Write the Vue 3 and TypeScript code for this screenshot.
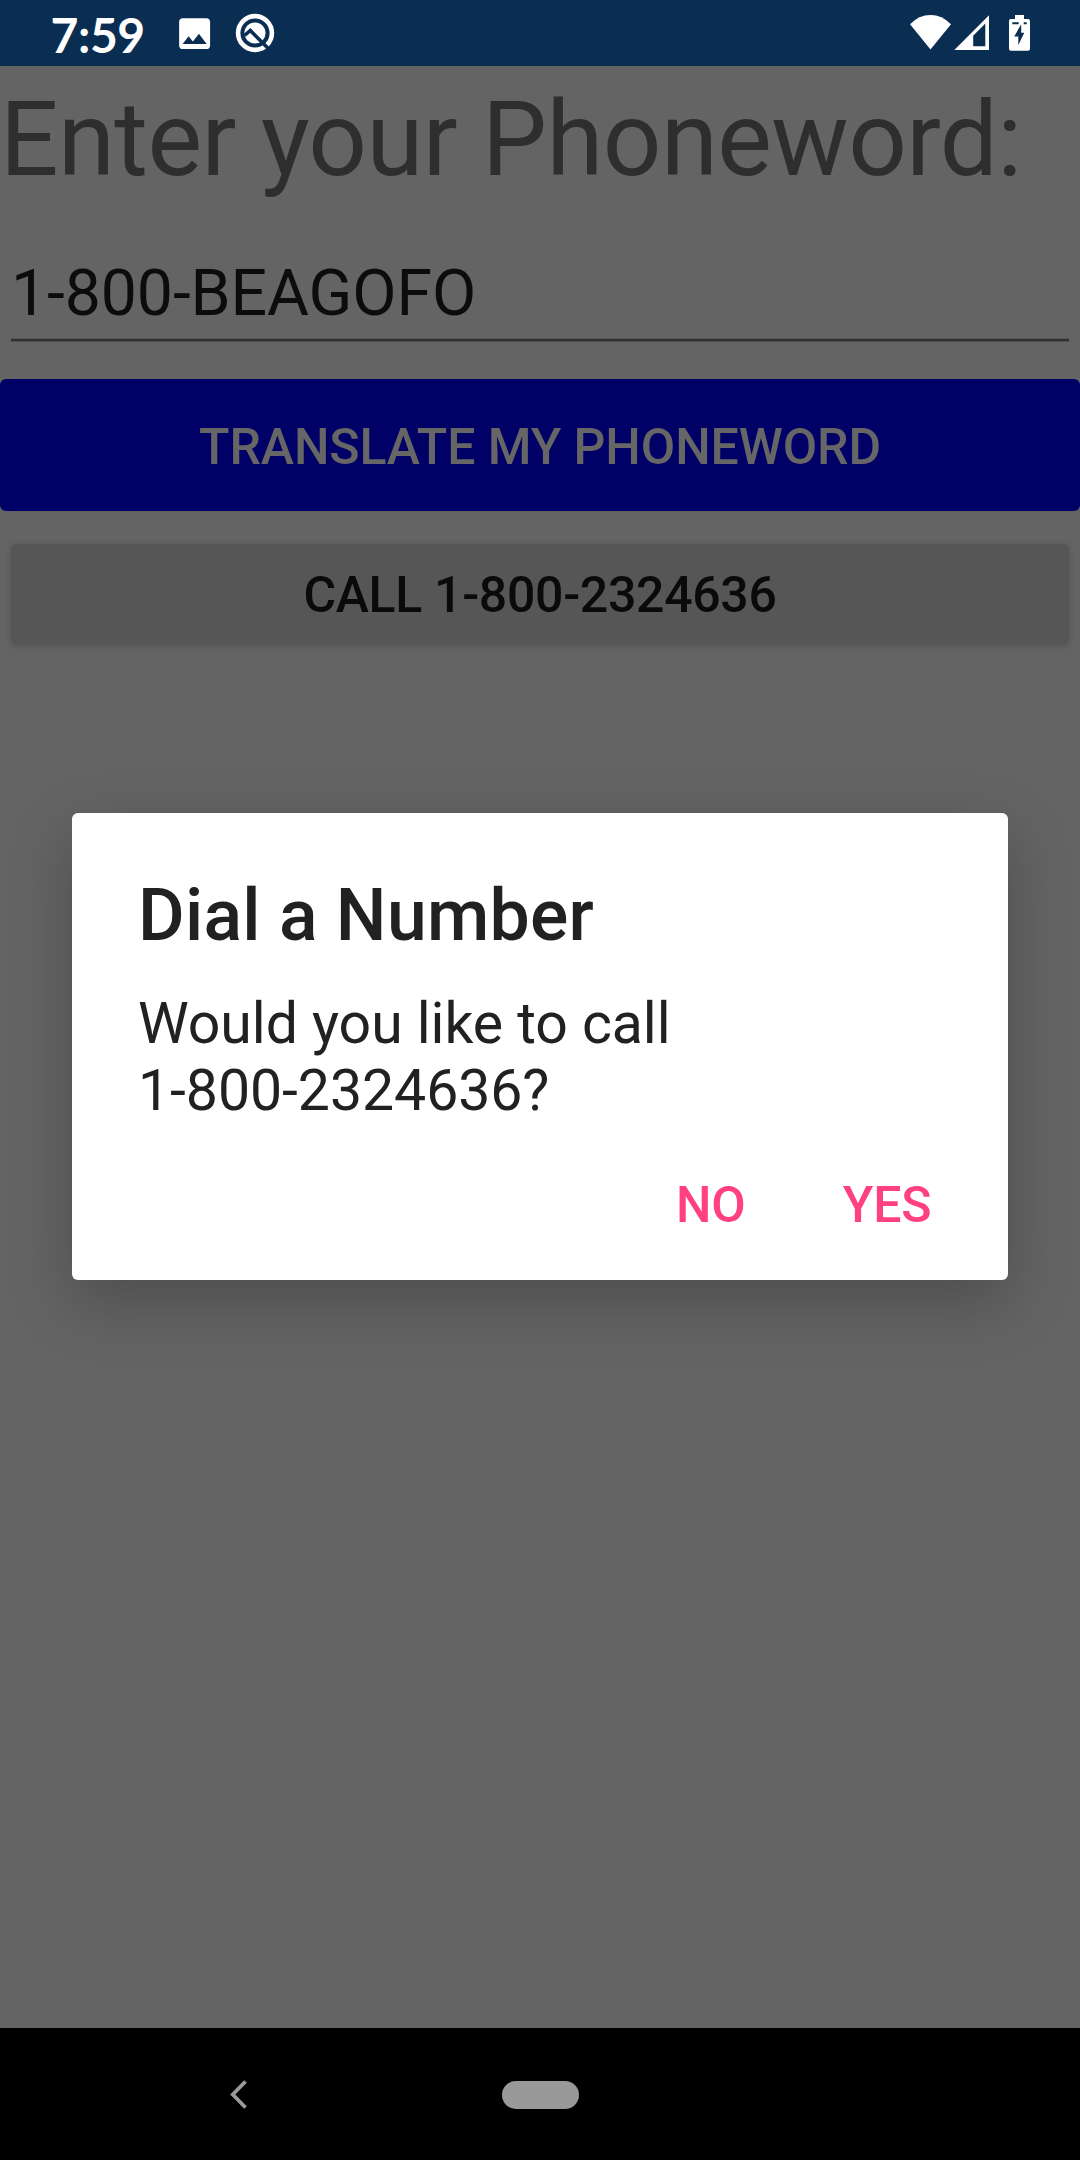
<script setup lang="ts">
import { ref } from 'vue'

const phoneword = ref<string>('1-800-BEAGOFO')
const translated = ref<string>('1-800-2324636')
const clock = '7:59'
</script>

<template>
  <div class="screen">
    <header class="status">
      <span class="clock">{{ clock }}</span>
      <svg class="photo" viewBox="0 0 24 24">
        <path fill="#fff" d="M21 19V5c0-1.1-.9-2-2-2H5c-1.1 0-2 .9-2 2v14c0 1.1.9 2 2 2h14c1.100 0 2-.9 2-2zM8.500 13.500l2.500 3.010L14.500 12l4.500 6H5l3.500-4.500z" />
      </svg>
      <svg class="lens" viewBox="0 0 40 40">
        <circle cx="20" cy="20" r="16.900" fill="none" stroke="#fff" stroke-width="4.600" />
        <circle cx="20" cy="20" r="10.600" fill="#fff" />
        <path d="M9.500 22.500L15.300 17.500L34 36.200" fill="none" stroke="#0a2e52" stroke-width="3.600" />
      </svg>
      <span class="spacer"></span>
      <svg class="system" viewBox="0 0 124 42">
        <path fill="#fff" d="M0 11.300Q9 2 20.500 2T41 11.300L20.500 36.500Z" />
        <path fill="#fff" fill-rule="evenodd" d="M44.300 37L79 2.300V37ZM63.200 22.700V33.200H75.300V10.500Z" />
        <path fill="#fff" d="M105 2h9v4h4q2 0 2 2V35.700q0 2-2 2H101q-2 0-2-2V8q0-2 2-2h4Z" />
        <path fill="#0a2e52" d="M102.300 9.300h6.400v2h-6.400zM113.700 9.300h3v2h-3zM111.200 11.300V19.700H114.300L108.300 32V23.500H104.200Z" />
      </svg>
    </header>

    <main class="content">
      <label class="prompt">Enter your Phoneword:</label>
      <div class="entry">{{ phoneword }}</div>
      <button class="translate">Translate my Phoneword</button>
      <button class="call">Call {{ translated }}</button>
    </main>

    <nav class="nav">
      <svg class="back" viewBox="0 0 18 30">
        <path d="M15.500 1.500L2.800 14.500L15.500 27.500" fill="none" stroke="#999" stroke-width="3.800" />
      </svg>
      <span class="home"></span>
    </nav>

    <section class="dialog">
      <h1 class="title">Dial a Number</h1>
      <p class="message">Would you like to call<br />{{ translated }}?</p>
      <div class="actions">
        <button class="action">No</button>
        <button class="action">Yes</button>
      </div>
    </section>
  </div>
</template>

<style>
body {
  margin: 0;
}
</style>

<style scoped>
.screen {
  position: relative;
  box-sizing: border-box;
  width: 1080px;
  height: 2160px;
  display: flex;
  flex-direction: column;
  background: #646464;
  font-family: Roboto, sans-serif;
  overflow: hidden;
}
.status {
  display: flex;
  height: 66px;
  background: #0a2e52;
  flex: none;
}
.clock {
  width: 123px;
  box-sizing: border-box;
  padding-left: 50.500px;
  font: 700 48px/70px Lato, sans-serif;
  letter-spacing: -0.400px;
  color: #fff;
  white-space: nowrap;
}
.photo {
  width: 41.25px;
  height: 41.25px;
  margin: 13px 0 0 51px;
}
.lens {
  width: 40px;
  height: 40px;
  margin: 13px 0 0 20px;
}
.spacer {
  flex: 1;
}
.system {
  width: 124px;
  height: 42px;
  margin: 13px 46px 0 0;
}
button {
  border: 0;
  padding: 0;
  font-family: inherit;
  font-weight: 500;
  font-size: 50px;
  text-transform: uppercase;
}
.content {
  flex: 1;
  display: flex;
  flex-direction: column;
}
.prompt {
  height: 149px;
  font-size: 103px;
  letter-spacing: -0.550px;
  line-height: 147px;
  color: #2e2e2e;
  white-space: nowrap;
}
.entry {
  height: 126px;
  box-sizing: border-box;
  margin: 0 11px;
  border-bottom: 2px solid #303030;
  box-shadow: 0 1px 0 #4e4e4e, inset 0 -1px 0 #585858;
  font-size: 64.350px;
  letter-spacing: -0.100px;
  line-height: 156px;
  color: #0c0c0c;
}
.translate {
  height: 132px;
  margin-top: 38px;
  border-radius: 6px;
  background: #000066;
  color: #666;
  letter-spacing: -0.080px;
  line-height: 136px;
}
.call {
  height: 101px;
  margin: 33px 11px 0;
  padding-top: 2px;
  border-radius: 6px;
  background: #565656;
  color: #0a0a0a;
  letter-spacing: -0.320px;
  line-height: 99px;
  box-shadow: 0 1px 6px rgba(0, 0, 0, 0.18);
}
.nav {
  box-sizing: border-box;
  height: 132px;
  padding-top: 1px;
  display: flex;
  align-items: center;
  background: #000;
}
.back {
  width: 18px;
  height: 30px;
  margin-left: 230px;
}
.home {
  width: 77px;
  height: 28px;
  margin-left: 254px;
  border-radius: 14px;
  background: #999;
}
.dialog {
  position: absolute;
  left: 72px;
  top: 813px;
  width: 936px;
  height: 467px;
  box-sizing: border-box;
  padding: 61px 66px 0;
  border-radius: 6px;
  background: #fff;
  color: #212121;
  box-shadow: 0 22px 64px rgba(0, 0, 0, 0.23);
}
.title {
  margin: 0;
  font-size: 71.500px;
  font-weight: 500;
  letter-spacing: 0.300px;
  line-height: 84px;
}
.message {
  margin: 32px 0 0;
  font-size: 57.200px;
  letter-spacing: -0.060px;
  line-height: 67px;
}
.actions {
  display: flex;
  justify-content: flex-end;
  gap: 97px;
  margin: 48px 10.500px 0 0;
}
.action {
  background: none;
  color: #ff4081;
  letter-spacing: -0.100px;
  line-height: 66px;
}
</style>
